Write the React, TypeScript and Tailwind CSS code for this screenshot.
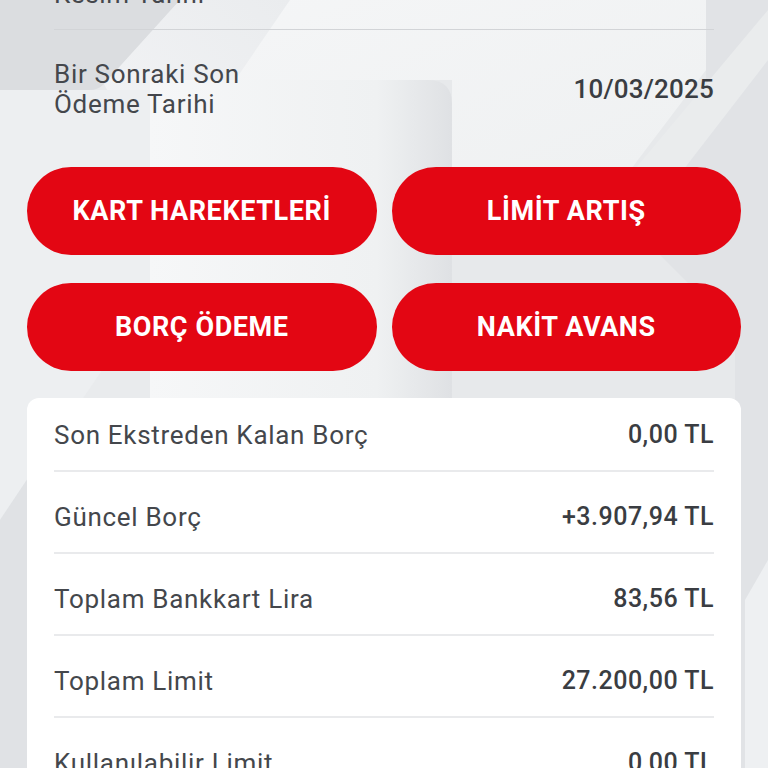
import React from "react";

const rows: [string, string][] = [
  ["Son Ekstreden Kalan Borç", "0,00 TL"],
  ["Güncel Borç", "+3.907,94 TL"],
  ["Toplam Bankkart Lira", "83,56 TL"],
  ["Toplam Limit", "27.200,00 TL"],
  ["Kullanılabilir Limit", "0,00 TL"],
];

const buttons = ["KART HAREKETLERİ", "LİMİT ARTIŞ", "BORÇ ÖDEME", "NAKİT AVANS"];

function Background() {
  return (
    <svg className="absolute inset-0" width="768" height="768" viewBox="0 0 768 768">
      <defs>
        <linearGradient id="rr" x1="0" y1="0" x2="1" y2="0">
          <stop offset="0" stopColor="#f6f7f8" />
          <stop offset="0.75" stopColor="#eff1f2" />
          <stop offset="1" stopColor="#dfe1e4" />
        </linearGradient>
        <linearGradient id="band" x1="0" y1="1" x2="1" y2="0">
          <stop offset="0" stopColor="#f3f4f6" />
          <stop offset="1" stopColor="#eaecee" />
        </linearGradient>
        <linearGradient id="right" x1="0" y1="0" x2="1" y2="1">
          <stop offset="0" stopColor="#f5f6f7" />
          <stop offset="1" stopColor="#eef0f1" />
        </linearGradient>
      </defs>
      <rect width="768" height="768" fill="#e7e9eb" />
      <polygon points="180,0 706,0 706,70 600,210 452,210 452,80 170,80" fill="url(#right)" />
      <path d="M0,0 H180 L104,84 Q98,90 90,90 H0 Z" fill="#dbdde0" />
      <polygon points="180,0 290,0 160,190 104,84" fill="url(#band)" />
      <path d="M150,80 H428 Q452,80 452,104 V768 H150 Z" fill="url(#rr)" />
      <rect x="0" y="90" width="150" height="678" fill="#e9ebed" />
      <polygon points="0,90 150,90 150,300 0,520" fill="#edeff1" />
      <polygon points="706,0 768,0 768,768 735,768 735,330 620,215 706,90" fill="#e1e3e6" />
      <polygon points="768,10 768,60 660,200 630,175" fill="#eaeced" />
      <polygon points="768,560 768,768 745,768 745,600" fill="#eef0f2" />
      <polygon points="0,520 60,430 60,768 0,768" fill="#e0e2e5" />
    </svg>
  );
}

export default function App() {
  const font = { fontFamily: "Roboto, 'Noto Sans', sans-serif" };
  return (
    <div className="relative w-[768px] h-[768px] overflow-hidden bg-[#e6e8eb]" style={font}>
      <Background />
      <div className="relative px-[27px]">
        <div className="px-[27px] -mt-[21px]">
          <div className="flex items-center justify-between pb-[20px] border-b border-[#d2d4d7]">
            <div className="text-[26px] leading-[30px] tracking-[0.7px] text-[#44474c]">Kesim Tarihi</div>
          </div>
          <div className="flex items-center justify-between pt-[29px]">
            <div className="text-[26px] leading-[30px] tracking-[0.7px] text-[#44474c]">
              Bir Sonraki Son
              <br />
              Ödeme Tarihi
            </div>
            <div className="text-[26px] leading-[30px] tracking-[0.2px] font-medium text-[#3a3d42]">10/03/2025</div>
          </div>
        </div>

        <div className="grid grid-cols-2 gap-x-[15px] gap-y-[28px] mt-[48px]">
          {buttons.map((b) => (
            <button
              key={b}
              className="h-[88px] rounded-full bg-[#e30613] text-white text-[27px] font-bold flex items-center justify-center tracking-[0.6px]"
            >
              {b}
            </button>
          ))}
        </div>

        <div className="mt-[27px] bg-white rounded-[12px] px-[27px]">
          {rows.map(([label, value], i) => (
            <div
              key={label}
              className={`flex items-center justify-between pb-[20px] border-b-2 border-[#e9eaec] ${
                i === 0 ? "pt-[22px]" : "pt-[30px]"
              }`}
            >
              <span className="text-[26px] leading-[30px] tracking-[0.7px] text-[#44474c]">{label}</span>
              <span className="text-[25px] leading-[30px] tracking-[0.5px] font-medium text-[#3a3d42]">{value}</span>
            </div>
          ))}
        </div>
      </div>
    </div>
  );
}
